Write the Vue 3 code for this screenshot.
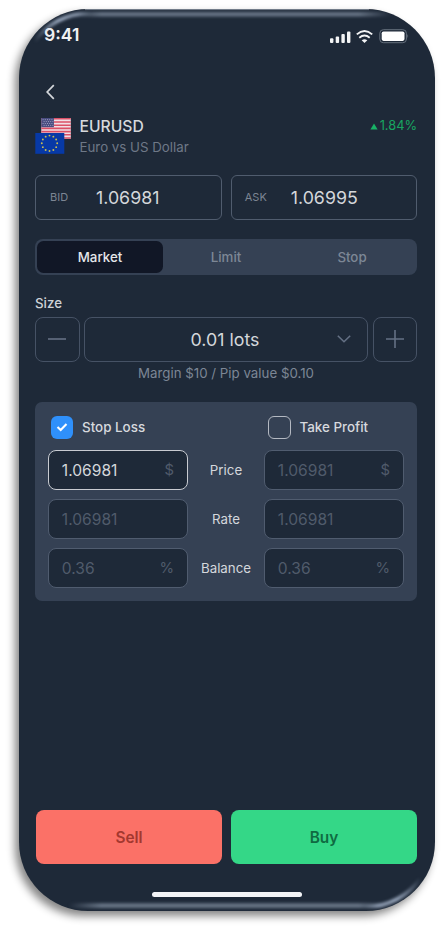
<script setup>
import { ref } from 'vue'

const tabs = ['Market', 'Limit', 'Stop']
const active = ref('Market')
const quotes = [
  { label: 'BID', value: '1.06981', cls: 'bid' },
  { label: 'ASK', value: '1.06995', cls: 'ask' },
]
const rows = [
  { label: 'Price', value: '1.06981', unit: '$', active: true },
  { label: 'Rate', value: '1.06981', unit: '' },
  { label: 'Balance', value: '0.36', unit: '%' },
]
const stars = Array.from({ length: 12 }, (_, i) => {
  const a = (i * Math.PI) / 6
  return { x: 14.5 + 7.7 * Math.sin(a), y: 10.3 - 7.7 * Math.cos(a) }
})
</script>

<template>
  <div class="stage">
    <main class="phone">
      <header class="status">
        <span class="time">9:41</span>
        <svg class="signals" width="80" height="16" viewBox="0 0 80 16">
          <g fill="#f4f5f6">
            <rect x="1" y="10.3" width="3.4" height="4.6" rx="1" />
            <rect x="6.7" y="8.4" width="3.4" height="6.5" rx="1" />
            <rect x="12.4" y="6" width="3.4" height="8.9" rx="1" />
            <rect x="18" y="3.6" width="3.4" height="11.3" rx="1" />
            <path d="M32.7 12.2 Q35.5 10.2 38.3 12.2 L35.5 14.9Z" />
          </g>
          <path d="M27.8 6.4 Q35.5 -0.4 43.2 6.4 M30.3 9.7 Q35.5 5.4 40.7 9.7" fill="none" stroke="#f4f5f6" stroke-width="1.9" />
          <rect x="50.8" y="1.7" width="26.6" height="13" rx="3.6" fill="none" stroke="#66707d" />
          <rect x="52.7" y="3.5" width="22.8" height="9.4" rx="1.8" fill="#fff" />
          <path d="M78.4 6 Q80 8 78.4 10.2Z" fill="#66707d" />
        </svg>
      </header>

      <nav class="nav">
        <svg width="12" height="18" viewBox="0 0 12 18">
          <path d="M9.8 2.2 L3.2 9 L9.8 15.8" fill="none" stroke="#d4d7db" stroke-width="1.7" />
        </svg>
      </nav>

      <section class="pair">
        <svg class="flags" width="37" height="38" viewBox="0 0 37 38">
          <rect x="6.3" y="1" width="29.5" height="20.8" fill="#f1dfe6" />
          <path d="M6.3 1.8h29.5M6.3 5h29.5M6.3 8.2h29.5M6.3 11.4h29.5M6.3 14.6h29.5M6.3 17.8h29.5M6.3 21h29.5" stroke="#db5067" stroke-width="1.6" />
          <rect x="6.3" y="1" width="12.6" height="9.2" fill="#484c80" />
          <path d="M7.6 2.7h11M8.6 4.6h10M7.6 6.5h11M8.6 8.4h10" stroke="#a5a6c4" stroke-width=".9" stroke-dasharray="1 1.2" />
          <g transform="translate(0 16)">
            <rect x="0.3" width="29" height="20.8" fill="#0739a6" />
            <circle v-for="(s, i) in stars" :key="i" :cx="s.x" :cy="s.y" r=".95" fill="#c9bd52" />
          </g>
        </svg>
        <div class="names">
          <h1>EURUSD</h1>
          <p>Euro vs US Dollar</p>
        </div>
        <div class="change">
          <svg width="8" height="7" viewBox="0 0 8 7"><path d="M4 .6 L7.6 6.6 H.4Z" fill="#18b266" /></svg>
          <span>1.84%</span>
        </div>
      </section>

      <section class="quotes">
        <div v-for="q in quotes" :key="q.label" class="quote" :class="q.cls">
          <small>{{ q.label }}</small>
          <strong>{{ q.value }}</strong>
        </div>
      </section>

      <section class="tabs">
        <button v-for="t in tabs" :key="t" :class="{ on: t === active }" @click="active = t">{{ t }}</button>
      </section>

      <label class="size-label">Size</label>
      <section class="size">
        <button class="step">
          <svg width="20" height="20" viewBox="0 0 20 20"><path d="M1 10H19" /></svg>
        </button>
        <div class="lots">
          <span>0.01 lots</span>
          <svg class="chevron" width="16" height="10" viewBox="0 0 16 10"><path d="M1.8 1.7 L8 7.7 L14.2 1.7" /></svg>
        </div>
        <button class="step">
          <svg width="20" height="20" viewBox="0 0 20 20"><path d="M1 10H19M10 1V19" /></svg>
        </button>
      </section>
      <p class="margin-note">Margin $10 / Pip value $0.10</p>

      <section class="panel">
        <div class="checks">
          <div class="check">
            <span class="box checked">
              <svg width="12" height="10" viewBox="0 0 12 10"><path d="M1.5 5 L4.7 8 L10.5 2" fill="none" stroke="#fff" stroke-width="2.1" /></svg>
            </span>
            <span>Stop Loss</span>
          </div>
          <div class="check right">
            <span class="box"></span>
            <span>Take Profit</span>
          </div>
        </div>
        <div v-for="r in rows" :key="r.label" class="row">
          <div class="field" :class="{ focus: r.active }"><span>{{ r.value }}</span><i>{{ r.unit }}</i></div>
          <span class="row-label">{{ r.label }}</span>
          <div class="field"><span>{{ r.value }}</span><i>{{ r.unit }}</i></div>
        </div>
      </section>

      <footer class="actions">
        <button class="sell">Sell</button>
        <button class="buy">Buy</button>
      </footer>
      <div class="home"></div>

      <!-- glossy rim of the device -->
      <svg class="rim" width="417" height="902" viewBox="0 0 417 902">
        <defs>
          <filter id="soft" x="0" y="0" width="417" height="902" filterUnits="userSpaceOnUse" color-interpolation-filters="sRGB">
            <feGaussianBlur stdDeviation="1.5" />
          </filter>
          <linearGradient id="lineFade" gradientUnits="userSpaceOnUse" x1="50" y1="0" x2="372" y2="0">
            <stop offset="0" stop-color="#667384" stop-opacity="0" />
            <stop offset=".1" stop-color="#667384" />
            <stop offset=".9" stop-color="#667384" />
            <stop offset="1" stop-color="#667384" stop-opacity="0" />
          </linearGradient>
          <linearGradient id="cornerA" gradientUnits="userSpaceOnUse" x1="16" y1="34" x2="72" y2="5">
            <stop offset="0" stop-color="#b4c3da" stop-opacity="0" />
            <stop offset=".5" stop-color="#b4c3da" stop-opacity=".85" />
            <stop offset=".8" stop-color="#b4c3da" stop-opacity=".7" />
            <stop offset="1" stop-color="#b4c3da" stop-opacity="0" />
          </linearGradient>
          <linearGradient id="cornerB" gradientUnits="userSpaceOnUse" x1="401" y1="868" x2="345" y2="897">
            <stop offset="0" stop-color="#b4c3da" stop-opacity="0" />
            <stop offset=".5" stop-color="#b4c3da" stop-opacity=".85" />
            <stop offset=".8" stop-color="#b4c3da" stop-opacity=".7" />
            <stop offset="1" stop-color="#b4c3da" stop-opacity="0" />
          </linearGradient>
        </defs>
        <g fill="none" filter="url(#soft)">
          <path d="M50 5.2 Q209 4.6 372 5.2" stroke="url(#lineFade)" stroke-width="4.4" />
          <path d="M50 896.6 Q209 897.2 372 896.6" stroke="url(#lineFade)" stroke-width="4.6" />
          <path d="M14 35 A65 65 0 0 1 72 4.5" stroke="url(#cornerA)" stroke-width="3.6" />
          <path d="M403 867 A65 65 0 0 1 345 897.5" stroke="url(#cornerB)" stroke-width="3.6" />
        </g>
        <path d="M66 .6H350" stroke="#7c8693" stroke-width="1" />
      </svg>
    </main>
  </div>
</template>

<style>
body {
  background: #fff;
}
</style>

<style scoped>
* {
  box-sizing: border-box;
}
.stage {
  height: 930px;
  padding: 9px 11px 0 18.5px;
  overflow: hidden;
  background: #fff;
  font-family: Inter, 'Liberation Sans', sans-serif;
}
.phone {
  position: relative;
  display: flex;
  flex-direction: column;
  width: 416.5px;
  height: 901.5px;
  padding: 0 18px 0 16.5px;
  border-radius: 69px;
  background: #1e2938;
  box-shadow: -4px 5px 9px rgba(0, 0, 0, 0.48);
}
h1,
p {
  margin: 0;
}
button {
  padding: 0;
  border: 0;
  font: inherit;
  color: inherit;
  background: none;
}
.status {
  display: flex;
  justify-content: space-between;
  height: 66px;
  padding: 15.5px 9px 0 9px;
}
.time {
  font-size: 17.6px;
  line-height: 20px;
  font-weight: 600;
  color: #f0f1f3;
}
.signals {
  margin: 3.5px -0.5px 0 0;
}
.nav {
  height: 42px;
  padding: 7.5px 0 0 9px;
}
.pair {
  display: flex;
  height: 58px;
}
.flags {
  flex: none;
}
.names {
  flex: 1;
  padding-left: 7.5px;
}
h1 {
  font-size: 15.7px;
  line-height: 20px;
  font-weight: 500;
  color: #d6d9dd;
}
.names p {
  font-size: 13.3px;
  line-height: 20px;
  color: #6e7887;
}
.change {
  display: flex;
  align-items: baseline;
  gap: 2px;
  height: 18px;
  padding-top: 0.5px;
  font-size: 12.8px;
  line-height: 16px;
  color: #18a661;
}
.quotes {
  display: flex;
  gap: 9px;
  height: 64px;
}
.quote {
  display: flex;
  align-items: center;
  flex: 1;
  height: 44.5px;
  padding-left: 14px;
  border: 1.4px solid #505c6e;
  border-radius: 6px;
}
.quote.ask {
  padding-left: 12.5px;
}
small {
  width: 46px;
  font-size: 11px;
  color: #7c8593;
}
.quote strong {
  font-size: 17.8px;
  font-weight: 400;
  color: #d4d7db;
}
.tabs {
  display: flex;
  height: 36px;
  padding: 2px;
  border-radius: 8px;
  background: #354154;
}
.tabs button {
  flex: 1;
  border-radius: 6.5px;
  font-size: 13.3px;
  font-weight: 500;
  color: #7d8796;
}
.tabs .on {
  background: #111726;
  color: #e6e7ea;
}
.size-label {
  height: 42px;
  padding-top: 20px;
  font-size: 13.3px;
  line-height: 16px;
  font-weight: 500;
  color: #cfd3d8;
}
.size {
  display: flex;
  gap: 4.5px;
  height: 44.5px;
}
.step,
.lots {
  display: flex;
  align-items: center;
  justify-content: center;
  border: 1.4px solid #465265;
  border-radius: 8px;
}
.step {
  width: 44.5px;
}
.lots {
  position: relative;
  flex: 1;
  padding-right: 2px;
  font-size: 17.8px;
  color: #d4d7db;
}
.size svg {
  fill: none;
  stroke: #647084;
  stroke-width: 1.6;
}
.lots .chevron {
  position: absolute;
  right: 15px;
  top: 16px;
}
.margin-note {
  height: 40px;
  padding-top: 3.5px;
  font-size: 13.3px;
  line-height: 16px;
  text-align: center;
  color: #7c8695;
}
.panel {
  display: flex;
  flex-direction: column;
  gap: 9px;
  height: 199.5px;
  padding: 14.5px 13px 0;
  border-radius: 7px;
  background: #354154;
}
.checks {
  display: flex;
  height: 24.5px;
}
.check {
  display: flex;
  align-items: center;
  width: 216px;
  height: 22.5px;
  gap: 9px;
  padding-left: 2.5px;
  font-size: 13.4px;
  font-weight: 500;
  color: #d7d9de;
}
.check.right {
  padding-left: 4px;
  width: auto;
}
.box {
  display: flex;
  align-items: center;
  justify-content: center;
  width: 22.5px;
  height: 22.5px;
  border: 1.4px solid #b4b9c2;
  border-radius: 6px;
}
.box.checked {
  border: 0;
  background: #2f90fb;
}
.row {
  display: grid;
  grid-template-columns: 140px 1fr 140px;
  height: 40px;
}
.field {
  display: flex;
  align-items: center;
  justify-content: space-between;
  height: 40px;
  padding: 1px 13px 0 12.8px;
  border: 1.4px solid #505c6f;
  border-radius: 8px;
  background: #1e2938;
  font-size: 15.6px;
  color: #505b6b;
}
.field.focus {
  border-color: #c8cbd1;
}
.field.focus span {
  color: #d4d7db;
}
.field i {
  font-size: 14.8px;
  font-style: normal;
}
.row-label {
  align-self: center;
  text-align: center;
  font-size: 13.3px;
  color: #d4d7dc;
}
.actions {
  display: flex;
  gap: 9px;
  height: 54px;
  margin-top: 209px;
}
.actions button {
  flex: 1;
  border-radius: 8px;
  font-size: 15.4px;
  font-weight: 600;
}
.sell {
  margin-left: 1px;
  background: #fb7167;
  color: #a3382f;
}
.buy {
  background: #34d787;
  color: #0f6b42;
}
.home {
  width: 150px;
  height: 5.5px;
  margin: 27.5px 0 0 117px;
  border-radius: 3px;
  background: #f3f4f7;
}
.rim {
  position: absolute;
  left: 0;
  top: 0;
  border-radius: 69px;
  pointer-events: none;
}
</style>
